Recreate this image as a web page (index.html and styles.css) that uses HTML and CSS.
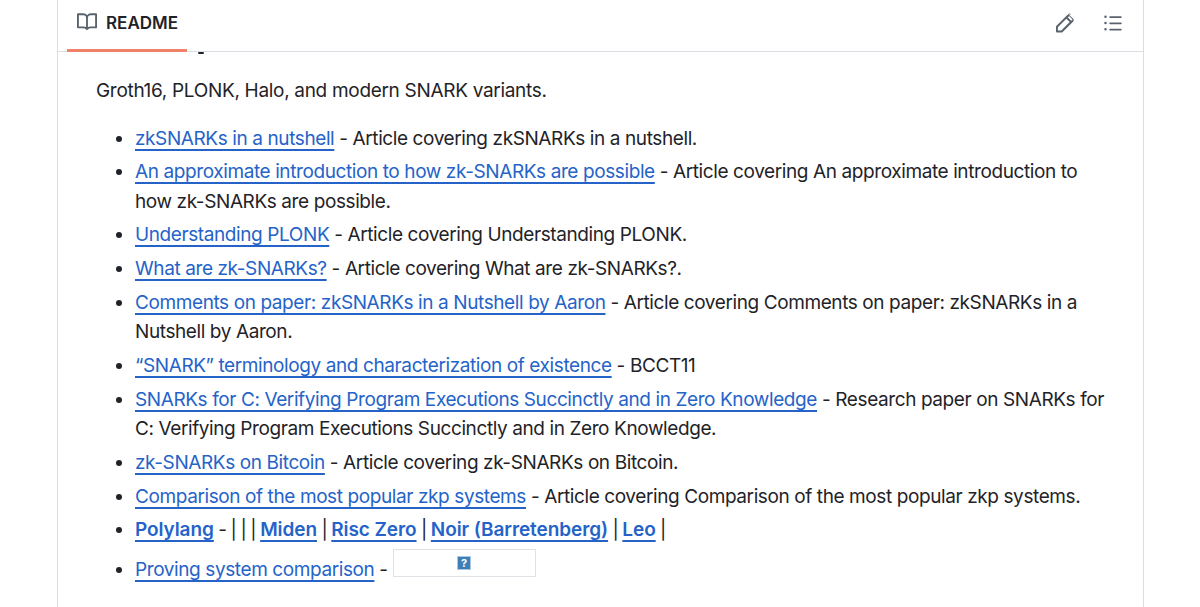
FILE: index.html
```html
<!DOCTYPE html>
<html lang="en">
<head>
    <meta charset="UTF-8">
    <title>README</title>
    <link rel="stylesheet" href="styles.css">
</head>
<body>

<div class="readme">
    <div class="readme-head">
        <div class="tab">
            <svg class="icon" viewBox="0 0 16 16" width="20" height="20"><path d="M0 1.75A.75.75 0 0 1 .75 1h4.253c1.227 0 2.317.59 3 1.501A3.743 3.743 0 0 1 11.006 1h4.245a.75.75 0 0 1 .75.75v10.5a.75.75 0 0 1-.75.75h-4.507a2.25 2.25 0 0 0-1.591.659l-.622.621a.75.75 0 0 1-1.06 0l-.622-.621A2.25 2.25 0 0 0 5.258 13H.75a.75.75 0 0 1-.75-.75Zm7.251 10.324.004-5.073-.002-2.253A2.25 2.25 0 0 0 5.003 2.5H1.5v9h3.757a3.75 3.75 0 0 1 1.994.574ZM8.755 4.75l-.004 7.322a3.752 3.752 0 0 1 1.992-.572H14.5v-9h-3.495a2.25 2.25 0 0 0-2.25 2.25Z"/></svg>
            <span class="tab-name">README</span>
        </div>
        <div class="tools">
            <svg class="icon" viewBox="0 0 16 16" width="20" height="20"><path d="m11.013 1.427 3.56 3.56a1.75 1.75 0 0 1 0 2.475l-.94.94-.002.002-7.5 7.5a.75.75 0 0 1-.53.22H1.75a.75.75 0 0 1-.75-.75v-3.851a.75.75 0 0 1 .22-.53l8.44-8.44.002-.002.94-.94a1.75 1.75 0 0 1 2.475 0ZM2.5 11.81v2.69h2.69l6.75-6.75-2.69-2.69Zm8-7.75 2.69 2.69.88-.88a.25.25 0 0 0 0-.354l-2.336-2.336a.25.25 0 0 0-.354 0Z" transform="translate(-1 -.5)"/></svg>
            <svg class="icon" viewBox="0 0 16 16" width="20" height="20"><path d="M5.75 2.5h8.5a.75.75 0 0 1 0 1.5h-8.5a.75.75 0 0 1 0-1.5Zm0 5h8.5a.75.75 0 0 1 0 1.5h-8.5a.75.75 0 0 1 0-1.5Zm0 5h8.5a.75.75 0 0 1 0 1.5h-8.5a.75.75 0 0 1 0-1.5ZM2 14a1 1 0 1 1 0-2 1 1 0 0 1 0 2Zm1-6a1 1 0 1 1-2 0 1 1 0 0 1 2 0ZM2 4a1 1 0 1 1 0-2 1 1 0 0 1 0 2Z"/></svg>
        </div>
    </div>
    <div class="scrolled-off"><span class="heading-tail"></span></div>

    <div class="readme-body">
        <p class="intro">Groth16, PLONK, Halo, and modern SNARK variants.</p>
        <ul>
            <li><a href="#">zkSNARKs in a nutshell</a> - Article covering zkSNARKs in a nutshell.</li>
            <li><a href="#">An approximate introduction to how zk-SNARKs are possible</a> - Article covering An approximate introduction to how zk-SNARKs are possible.</li>
            <li><a href="#">Understanding PLONK</a> - Article covering Understanding PLONK.</li>
            <li><a href="#">What are zk-SNARKs?</a> - Article covering What are zk-SNARKs?.</li>
            <li><a href="#">Comments on paper: zkSNARKs in a Nutshell by Aaron</a> - Article covering Comments on paper: zkSNARKs in a Nutshell by Aaron.</li>
            <li><a href="#">“SNARK” terminology and characterization of existence</a> - BCCT11</li>
            <li><a href="#">SNARKs for C: Verifying Program Executions Succinctly and in Zero Knowledge</a> - Research paper on SNARKs for C: Verifying Program Executions Succinctly and in Zero Knowledge.</li>
            <li><a href="#">zk-SNARKs on Bitcoin</a> - Article covering zk-SNARKs on Bitcoin.</li>
            <li><a href="#">Comparison of the most popular zkp systems</a> - Article covering Comparison of the most popular zkp systems.</li>
            <li class="pipes"><a href="#"><strong>Polylang</strong></a> - | | | <a href="#"><strong>Miden</strong></a> | <a href="#"><strong>Risc Zero</strong></a> | <a href="#"><strong>Noir (Barretenberg)</strong></a> | <a href="#"><strong>Leo</strong></a> |</li>
            <li class="with-image"><a href="#">Proving system comparison</a> - <span class="broken-img"><span class="broken-icon">?</span></span></li>
        </ul>
    </div>
</div>

</body>
</html>
```

FILE: styles.css
```css
body {
    margin: 0;
    height: 607px;
    overflow: hidden;
    background-color: #ffffff;
    font-family: Inter, "Liberation Sans", sans-serif;
    color: #1f2328;
}
.readme {
    width: 1087px;
    height: 607px;
    margin-left: 57px;
    border-left: 1px solid #d8dee4;
    border-right: 1px solid #d8dee4;
    box-sizing: border-box;
}
.readme-head {
    height: 52px;
    box-sizing: border-box;
    border-bottom: 1px solid #d8dee4;
    display: flex;
    justify-content: space-between;
    padding: 0 20px 0 9px;
}
.tab {
    width: 120px;
    height: 52px;
    box-sizing: border-box;
    border-bottom: 3px solid #f0826b;
    display: flex;
    align-items: center;
    gap: 9px;
    padding: 0 0 5px 10px;
}
.tab-name {
    font-size: 17px;
    font-weight: 600;
    padding-top: 2px;
}
.icon {
    fill: #59636e;
    flex-shrink: 0;
}
.tools {
    display: flex;
    gap: 27px;
    align-items: center;
    padding-bottom: 6px;
}
.scrolled-off {
    height: 3px;
    padding-left: 140px;
}
.heading-tail {
    display: block;
    width: 6px;
    height: 2px;
    background: #1f2328;
    border-radius: 1px;
}
.readme-body {
    padding: 21px 0 0 38px;
    font-size: 19px;
    letter-spacing: -0.31px;
    line-height: 29.5px;
}
.intro {
    margin: 0 0 18px;
}
ul {
    margin: 0;
    padding: 0 0 0 39px;
    width: 975px;
    letter-spacing: -0.4px;
}
li {
    margin-bottom: 4.2px;
}
a {
    color: #2563c9;
    text-decoration: underline;
    text-underline-offset: 4px;
    text-decoration-thickness: 1.5px;
}
strong {
    font-weight: 600;
    letter-spacing: -0.08px;
}
.pipes {
    letter-spacing: -0.9px;
}
.with-image {
    margin-top: 4px;
}
.broken-img {
    display: inline-flex;
    justify-content: center;
    width: 143px;
    height: 28px;
    box-sizing: border-box;
    border: 1px solid #dfe3e8;
    padding-top: 6px;
    vertical-align: 9px;
}
.broken-icon {
    width: 14px;
    height: 14px;
    box-sizing: border-box;
    background: #3f7fb8;
    border: 1px solid #a9c8e2;
    color: #ffffff;
    font-size: 11px;
    font-weight: 700;
    line-height: 12px;
    letter-spacing: 0;
    text-align: center;
}
```
